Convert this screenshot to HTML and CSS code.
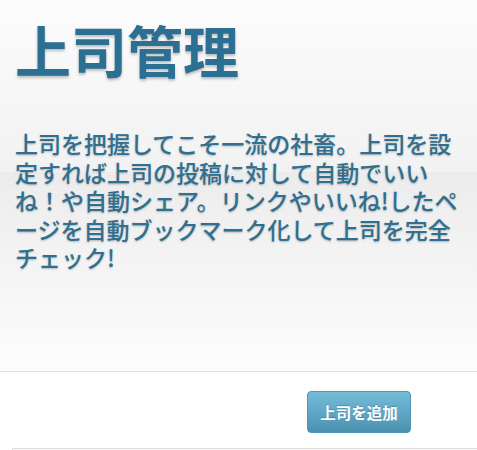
FILE: index.html
```html
<!DOCTYPE html>
<html lang="ja">
<head>
<meta charset="utf-8">
<title>上司管理</title>
<link rel="stylesheet" href="styles.css">
</head>
<body>
<section class="hero">
  <h1 class="hero-title">上司管理</h1>
  <p class="hero-text">上司を把握してこそ一流の社畜。上司を設定すれば上司の投稿に対して自動でいいね！や自動シェア。リンクやいいね!したページを自動ブックマーク化して上司を完全チェック!</p>
</section>
<div class="actions">
  <button class="btn-add" type="button">上司を追加</button>
</div>
<div class="list"></div>
</body>
</html>
```
FILE: styles.css
```css
html, body {
  margin: 0;
  padding: 0;
  background: #fff;
  overflow: hidden;
}
body {
  font-family: "Noto Sans CJK JP", "Noto Sans", sans-serif;
  width: 477px;
  height: 450px;
}
.hero {
  box-sizing: border-box;
  height: 372px;
  padding: 15px 12px 0 15px;
  border-bottom: 1px solid #dedede;
  background: linear-gradient(#fcfcfc 0px, #f2f2f2 172px, #ececec 172px, #fdfdfd 371px);
}
.hero-title {
  margin: 0;
  font-size: 56px;
  line-height: 67px;
  font-weight: 700;
  color: #2b6f92;
  text-shadow: 0 2px 3px rgba(0,0,0,0.25);
}
.hero-text {
  margin: 47px 0 0;
  font-size: 23px;
  line-height: 28.5px;
  font-weight: 500;
  color: #2f6f8f;
  text-shadow: 0 1px 2px rgba(0,0,0,0.25);
}
.actions {
  display: flex;
  justify-content: flex-end;
  padding: 19px 66px 0 0;
  height: 57px;
  box-sizing: border-box;
}
.btn-add {
  width: 104px;
  height: 42px;
  padding: 0;
  border: 1px solid #4f95b4;
  border-radius: 4px;
  background: linear-gradient(#74bdd9, #4a91b0);
  color: #fff;
  font-family: "Noto Sans CJK JP", "Noto Sans", sans-serif;
  font-size: 15.5px;
  font-weight: 700;
  text-shadow: 0 -1px 0 rgba(0,0,0,0.2);
}
.list {
  margin: 19px 0 0 12px;
  height: 1px;
  border-top: 1px solid #dcdcdc;
  border-left: 1px solid #dcdcdc;
  border-top-left-radius: 5px;
}
```
